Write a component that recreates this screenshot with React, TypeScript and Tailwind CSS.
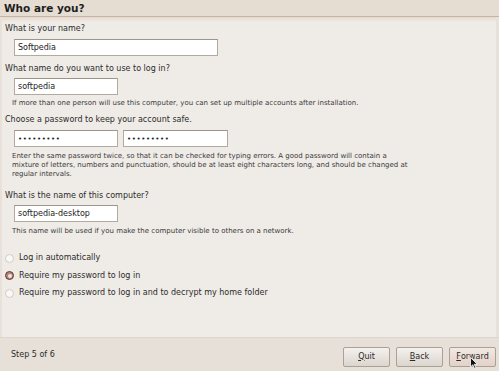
import React from 'react';

// ─── Small pieces ─────────────────────────────────────────────────────────────

function Field({ value, width, secret }: { value: string; width: string; secret?: boolean }) {
    return (
        <div
            className={`${width} h-[17px] flex items-center bg-white border border-[#b2a99f] border-t-[#9d958c] pl-[3px] text-[8px] text-[#222]`}
        >
            {secret ? <span className="tracking-[0.6px] text-[7px]">•••••••••</span> : value}
        </div>
    );
}

function Radio({ checked, label }: { checked?: boolean; label: string }) {
    return (
        <div className="flex items-center h-[10px] gap-[5px]">
            {checked ? (
                <span className="w-[9px] h-[9px] rounded-full bg-[#a7857a] border border-[#6f3b2e] flex items-center justify-center">
                    <span className="w-[4px] h-[4px] rounded-full bg-[#efe4de]" />
                </span>
            ) : (
                <span className="w-[9px] h-[9px] rounded-full bg-[#faf8f6] border border-[#d2cbc3]" />
            )}
            <span className="text-[8px] text-[#2b2b2b]">{label}</span>
        </div>
    );
}

function Button({ children, active }: { children: React.ReactNode; active?: boolean }) {
    return (
        <div
            className={`w-[47px] h-[20px] flex items-center justify-center rounded-[2px] border border-[#a9a096] text-[8px] text-[#2b2b2b] ${
                active
                    ? 'bg-gradient-to-b from-[#f3e8e2] to-[#e2d2c8]'
                    : 'bg-gradient-to-b from-[#f4f1ee] to-[#dcd5ce]'
            }`}
        >
            {children}
        </div>
    );
}

// ─── Page ─────────────────────────────────────────────────────────────────────

export default function App() {
    return (
        <div
            className="w-[499px] h-[371px] flex flex-col bg-[#e7e1da] text-[#2b2b2b] overflow-hidden"
            style={{ fontFamily: '"DejaVu Sans", sans-serif' }}
        >
            <div className="h-[17px] shrink-0 bg-[#e5dcd2] border-b border-[#c2b5a8] px-[4px] flex items-center">
                <span className="font-bold text-[10.5px] leading-none text-[#1e1e1e]">Who are you?</span>
            </div>

            <div className="flex-1 flex flex-col mr-[3px] ml-[2px] bg-[#efebe7]">
                <div className="h-[5px] bg-gradient-to-b from-[#e6d9cc] to-[#efebe7]" />

                <div className="flex flex-col px-[3px] text-[8px] leading-[10px]">
                    <div className="mt-[2px]">What is your name?</div>
                    <div className="mt-[5px] ml-[9px]">
                        <Field value="Softpedia" width="w-[204px]" />
                    </div>

                    <div className="mt-[8px]">What name do you want to use to log in?</div>
                    <div className="mt-[4px] ml-[9px]">
                        <Field value="softpedia" width="w-[104px]" />
                    </div>
                    <div className="mt-[4px] ml-[7px] text-[7px] leading-[8px] text-[#3a3a3a]">
                        If more than one person will use this computer, you can set up multiple accounts after installation.
                    </div>

                    <div className="mt-[8px]">Choose a password to keep your account safe.</div>
                    <div className="mt-[5px] ml-[9px] flex gap-[5px]">
                        <Field value="" secret width="w-[104px]" />
                        <Field value="" secret width="w-[105px]" />
                    </div>
                    <div className="mt-[5px] ml-[7px] text-[7px] leading-[9px] text-[#3a3a3a]">
                        Enter the same password twice, so that it can be checked for typing errors. A good password will contain a
                        <br />
                        mixture of letters, numbers and punctuation, should be at least eight characters long, and should be changed at
                        <br />
                        regular intervals.
                    </div>

                    <div className="mt-[12px]">What is the name of this computer?</div>
                    <div className="mt-[4px] ml-[9px]">
                        <Field value="softpedia-desktop" width="w-[104px]" />
                    </div>
                    <div className="mt-[5px] ml-[7px] text-[7px] leading-[8px] text-[#3a3a3a]">
                        This name will be used if you make the computer visible to others on a network.
                    </div>

                    <div className="mt-[18px] flex flex-col gap-[7.5px]">
                        <Radio label="Log in automatically" />
                        <Radio checked label="Require my password to log in" />
                        <Radio label="Require my password to log in and to decrypt my home folder" />
                    </div>
                </div>
            </div>

            <div className="h-[34px] shrink-0 flex items-center pl-[11px] pr-[3px] bg-[#e6e0d9] border-t border-[#ddd6ce]">
                <span className="text-[8px]">Step 5 of 6</span>
                <div className="ml-auto flex gap-[6px] pt-[4px]">
                    <Button>
                        <span className="underline">Q</span>uit
                    </Button>
                    <Button>
                        <span className="underline">B</span>ack
                    </Button>
                    <div className="relative">
                        <Button active>
                            <span className="underline">F</span>orward
                        </Button>
                        <svg className="absolute left-[21px] top-[10px]" width="8" height="12" viewBox="0 0 8 12">
                            <path d="M0.5 0.5 L0.5 10 L2.8 7.8 L4.4 11.3 L5.8 10.7 L4.2 7.3 L7.3 7.3 Z" fill="#111" stroke="#fff" strokeWidth="0.8" />
                        </svg>
                    </div>
                </div>
            </div>
        </div>
    );
}
